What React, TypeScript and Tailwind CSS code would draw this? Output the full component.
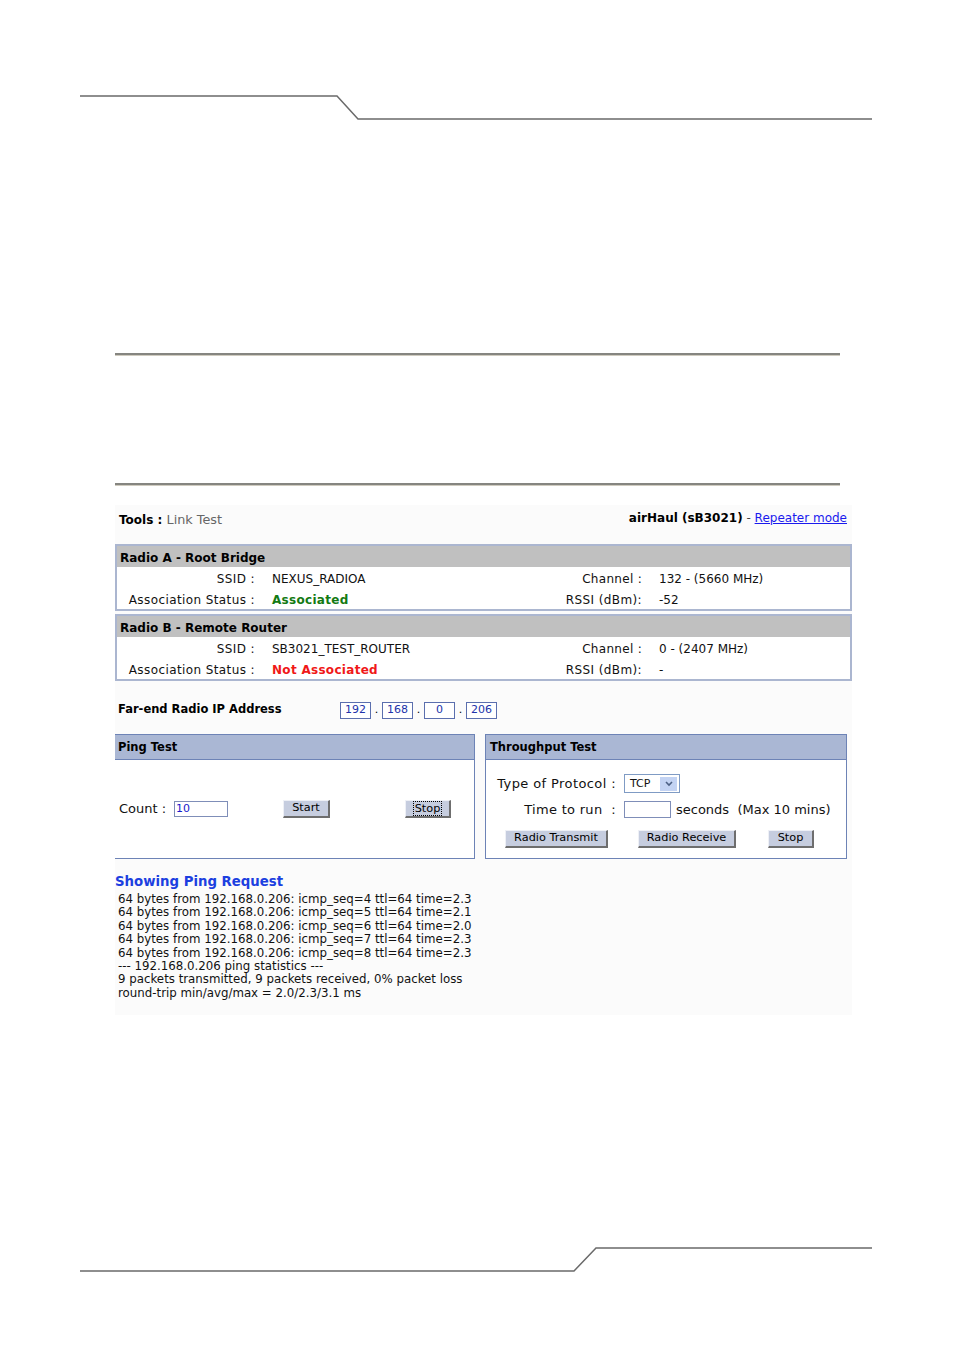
const Rule = () => (
  <div className="h-[3px] w-[725px] ml-[115px] border-t-2 border-[#858580] border-b border-b-[#cfcbbf]" />
);

const XpButton = ({ label, w, focus }: { label: string; w: string; focus?: boolean }) => (
  <div
    className={`${w} h-[18px] flex items-center justify-center bg-[#c6cddf] border border-t-[#eef0f6] border-l-[#eef0f6] border-r-[#6e6e6e] border-b-[#6e6e6e] border-r-2 border-b-2 text-[11.3px] text-black`}
  >
    <span className={focus ? "outline outline-1 outline-dotted outline-black px-[1px] leading-[13px]" : ""}>{label}</span>
  </div>
);

const RadioBox = ({
  title,
  ssid,
  status,
  statusColor,
  channel,
  rssi,
}: {
  title: string;
  ssid: string;
  status: string;
  statusColor: string;
  channel: string;
  rssi: string;
}) => (
  <div className="w-[737px] border-2 border-[#abb6d0] bg-white">
    <div className="h-[21px] bg-[#c0c0c0] flex items-center pt-[3px] pl-[3px] text-[12px] font-bold text-black">
      {title}
    </div>
    <div className="h-[21px] flex items-center pt-[3px] text-[12px] text-[#111]">
      <div className="w-[138px] text-right tracking-[0.4px]">SSID :</div>
      <div className="w-[17px]" />
      <div className="w-[268px]">{ssid}</div>
      <div className="w-[102px] text-right tracking-[0.3px]">Channel :</div>
      <div className="w-[17px]" />
      <div>{channel}</div>
    </div>
    <div className="h-[21px] flex items-center pt-[3px] text-[12px] text-[#111]">
      <div className="w-[138px] text-right whitespace-nowrap tracking-[0.4px]">Association Status :</div>
      <div className="w-[17px]" />
      <div className={`w-[268px] font-bold tracking-[0.3px] ${statusColor}`}>{status}</div>
      <div className="w-[102px] text-right tracking-[0.4px]">RSSI (dBm):</div>
      <div className="w-[17px]" />
      <div>{rssi}</div>
    </div>
  </div>
);

const IpBox = ({ v }: { v: string }) => (
  <div className="w-[31px] h-[17px] border border-[#5b6fae] bg-white flex items-center justify-center text-[11px] text-[#2233aa]">
    {v}
  </div>
);

const pingLines = [
  "64 bytes from 192.168.0.206: icmp_seq=4 ttl=64 time=2.3",
  "64 bytes from 192.168.0.206: icmp_seq=5 ttl=64 time=2.1",
  "64 bytes from 192.168.0.206: icmp_seq=6 ttl=64 time=2.0",
  "64 bytes from 192.168.0.206: icmp_seq=7 ttl=64 time=2.3",
  "64 bytes from 192.168.0.206: icmp_seq=8 ttl=64 time=2.3",
  "--- 192.168.0.206 ping statistics ---",
  "9 packets transmitted, 9 packets received, 0% packet loss",
  "round-trip min/avg/max = 2.0/2.3/3.1 ms",
];

export default function App() {
  return (
    <div className="w-[954px] h-[1351px] bg-white font-['DejaVu_Sans',sans-serif] pt-[94px]">
      {/* page header */}
      <svg width="954" height="28" className="block">
        <polyline points="80,2 337,2 358,25 872,25" fill="none" stroke="#6a6a6a" strokeWidth="1.5" />
      </svg>

      <div className="mt-[231px]">
        <Rule />
      </div>
      <div className="mt-[127px]">
        <Rule />
      </div>

      {/* screenshot */}
      <div className="mt-[19px] ml-[115px] w-[737px] h-[510px] bg-[#fbfbfb]">
        <div className="h-[22px] flex items-start justify-between pt-[6px] pl-[4px] pr-[5px] text-[12px] leading-[14px]">
          <div className="mt-[2px]">
            <span className="font-bold text-black">Tools : </span>
            <span className="text-[#666] text-[12.8px]">Link Test</span>
          </div>
          <div>
            <span className="font-bold text-black">airHaul (sB3021)</span>
            <span className="text-[#444]"> - </span>
            <span className="text-[#1a1aee] underline">Repeater mode</span>
          </div>
        </div>

        <div className="mt-[17px] flex flex-col gap-[3px]">
          <RadioBox
            title="Radio A - Root Bridge"
            ssid="NEXUS_RADIOA"
            status="Associated"
            statusColor="text-[#137a13]"
            channel="132 - (5660 MHz)"
            rssi="-52"
          />
          <RadioBox
            title="Radio B - Remote Router"
            ssid="SB3021_TEST_ROUTER"
            status="Not Associated"
            statusColor="text-[#f01818]"
            channel="0 - (2407 MHz)"
            rssi="-"
          />
        </div>

        <div className="mt-[20px] h-[19px] flex items-center pl-[3px]">
          <div className="w-[222px] text-[11.5px] font-bold text-black -mt-[1px]">Far-end Radio IP Address</div>
          <IpBox v="192" />
          <div className="w-[11px] text-center text-[11px]">.</div>
          <IpBox v="168" />
          <div className="w-[11px] text-center text-[11px]">.</div>
          <IpBox v="0" />
          <div className="w-[11px] text-center text-[11px]">.</div>
          <IpBox v="206" />
        </div>

        <div className="mt-[14px] flex gap-[10px]">
          {/* ping test */}
          <div className="w-[360px] h-[125px] border border-l-0 border-[#6d83b6] bg-white flex flex-col">
            <div className="h-[25px] bg-[#aab7d4] border-b border-[#6d83b6] flex items-center pt-[2px] pl-[3px] text-[11.5px] font-bold text-black">
              Ping Test
            </div>
            <div className="flex-1 flex items-center pl-[4px] text-[13px] text-[#111]">
              <div className="w-[55px]">Count :</div>
              <div className="w-[54px] h-[16px] border border-[#7f8eb8] bg-white text-[11px] text-[#1a1acc] leading-[14px] pl-[1px]">
                10
              </div>
              <div className="w-[55px]" />
              <XpButton label="Start" w="w-[47px]" />
              <div className="w-[75px]" />
              <XpButton label="Stop" w="w-[46px]" focus />
            </div>
          </div>

          {/* throughput test */}
          <div className="w-[362px] h-[125px] border border-[#6d83b6] bg-white flex flex-col">
            <div className="h-[25px] bg-[#aab7d4] border-b border-[#6d83b6] flex items-center pt-[2px] pl-[4px] text-[11.5px] font-bold text-black">
              Throughput Test
            </div>
            <div className="flex items-center mt-[14px] text-[13px] text-[#111]">
              <div className="w-[130px] text-right whitespace-nowrap tracking-[0.4px]">Type of Protocol :</div>
              <div className="w-[8px]" />
              <div className="w-[56px] h-[19px] border border-[#7f9bc4] bg-white flex items-center justify-between pl-[5px] pr-[2px] text-[11px]">
                <span>TCP</span>
                <div className="w-[17px] h-[14px] bg-[#c3d3f3] flex items-center justify-center">
                  <svg width="8" height="6" viewBox="0 0 8 6">
                    <polyline points="1,1 4,4 7,1" fill="none" stroke="#4d6185" strokeWidth="1.6" />
                  </svg>
                </div>
              </div>
            </div>
            <div className="flex items-center mt-[6px] text-[13px] text-[#111]">
              <div className="w-[130px] text-right whitespace-nowrap tracking-[0.3px]">Time to run&nbsp;&nbsp;:</div>
              <div className="w-[8px]" />
              <div className="w-[47px] h-[17px] border border-[#7f8eb8] bg-white" />
              <div className="ml-[5px] whitespace-pre">seconds  (Max 10 mins)</div>
            </div>
            <div className="flex items-center mt-[11px] pl-[19px]">
              <XpButton label="Radio Transmit" w="w-[103px]" />
              <div className="w-[30px]" />
              <XpButton label="Radio Receive" w="w-[98px]" />
              <div className="w-[32px]" />
              <XpButton label="Stop" w="w-[46px]" />
            </div>
          </div>
        </div>

        <div className="mt-[14px] text-[13.3px] font-bold text-[#1c3fe0] leading-[17px]">Showing Ping Request</div>
        <div className="w-[357px] overflow-hidden pl-[3px] mt-[3px]">
          {pingLines.map((l) => (
            <div key={l} className="whitespace-nowrap text-[11.8px] leading-[13.4px] text-[#111]">
              {l}
            </div>
          ))}
        </div>
      </div>

      {/* page footer */}
      <div className="mt-[231px]">
        <svg width="954" height="28" className="block">
          <polyline points="80,25 574,25 596,2 872,2" fill="none" stroke="#6a6a6a" strokeWidth="1.5" />
        </svg>
      </div>
    </div>
  );
}
